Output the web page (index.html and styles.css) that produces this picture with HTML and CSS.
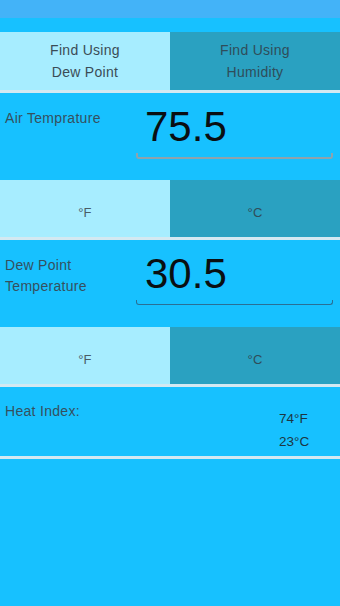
FILE: index.html
```html
<!DOCTYPE html>
<html>
<head>
<meta charset="utf-8">
<link rel="stylesheet" href="styles.css">
</head>
<body>
<div class="app">
  <div class="status"></div>
  <div class="header"></div>
  <div class="tabs">
    <div class="tab tab-on">Find Using<br>Dew Point</div>
    <div class="tab tab-off">Find Using<br>Humidity</div>
  </div>
  <div class="sep"></div>
  <div class="field">
    <div class="label">Air Temprature</div>
    <div class="input">
      <div class="value">75.5</div>
      <div class="underline underline-gray"></div>
    </div>
  </div>
  <div class="tabs units">
    <div class="tab tab-on">°F</div>
    <div class="tab tab-off">°C</div>
  </div>
  <div class="sep"></div>
  <div class="field">
    <div class="label label-two">Dew Point<br>Temperature</div>
    <div class="input">
      <div class="value">30.5</div>
      <div class="underline underline-dark"></div>
    </div>
  </div>
  <div class="tabs units">
    <div class="tab tab-on">°F</div>
    <div class="tab tab-off">°C</div>
  </div>
  <div class="sep"></div>
  <div class="result">
    <div class="label">Heat Index:</div>
    <div class="result-values">74°F<br>23°C</div>
  </div>
  <div class="sep"></div>
  <div class="rest"></div>
</div>
</body>
</html>
```

FILE: styles.css
```css
html, body {
  margin: 0;
  padding: 0;
}
body {
  background: #17c1ff;
  font-family: "Liberation Sans", Arial, Helvetica, sans-serif;
}
.app {
  width: 340px;
  height: 606px;
  display: flex;
  flex-direction: column;
  background: #17c1ff;
  overflow: hidden;
}
.status {
  height: 18px;
  background: #43b3f8;
}
.header {
  height: 14px;
  background: #17c1ff;
}
.tabs {
  display: flex;
  height: 58px;
}
.tabs.units {
  height: 57px;
}
.tab {
  flex: 1;
  display: flex;
  align-items: center;
  justify-content: center;
  text-align: center;
  font-size: 14px;
  letter-spacing: 0.3px;
  line-height: 22px;
  color: #3b4c56;
}
.units .tab {
  padding-top: 8px;
  box-sizing: border-box;
  font-size: 13px;
  color: #4a5c66;
}
.tab-on {
  background: #a7edff;
}
.tab-off {
  background: #2aa1c1;
  color: #2f4d5a;
}
.units .tab-off {
  color: #2f4d5a;
}
.sep {
  height: 3px;
  background: #d3e9f2;
}
.field {
  height: 87px;
  display: flex;
  box-sizing: border-box;
}
.label {
  width: 136px;
  padding: 15px 0 0 5px;
  box-sizing: border-box;
  font-size: 14px;
  letter-spacing: 0.3px;
  line-height: 21px;
  color: #35505e;
}
.value {
  height: 60px;
  padding: 10px 0 0 9px;
  box-sizing: border-box;
  font-size: 42px;
  line-height: 48px;
  color: #0a0f12;
}
.underline {
  height: 4px;
  border: 2px solid #8fa3ad;
  border-top: none;
  border-radius: 0 0 3px 3px;
}
.underline-gray {
  border-color: #8fa3ad;
}
.underline-dark {
  border-color: #2a6f95;
  border-width: 1.5px;
}
.input {
  width: 197px;
  display: flex;
  flex-direction: column;
}
.result {
  height: 69px;
  display: flex;
}
.result .label {
  padding-top: 14px;
}
.result-values {
  margin-left: 143px;
  padding-top: 20px;
  font-size: 13.5px;
  line-height: 23px;
  color: #1d3642;
}
.rest {
  flex: 1;
  background: #17c1ff;
}
```
